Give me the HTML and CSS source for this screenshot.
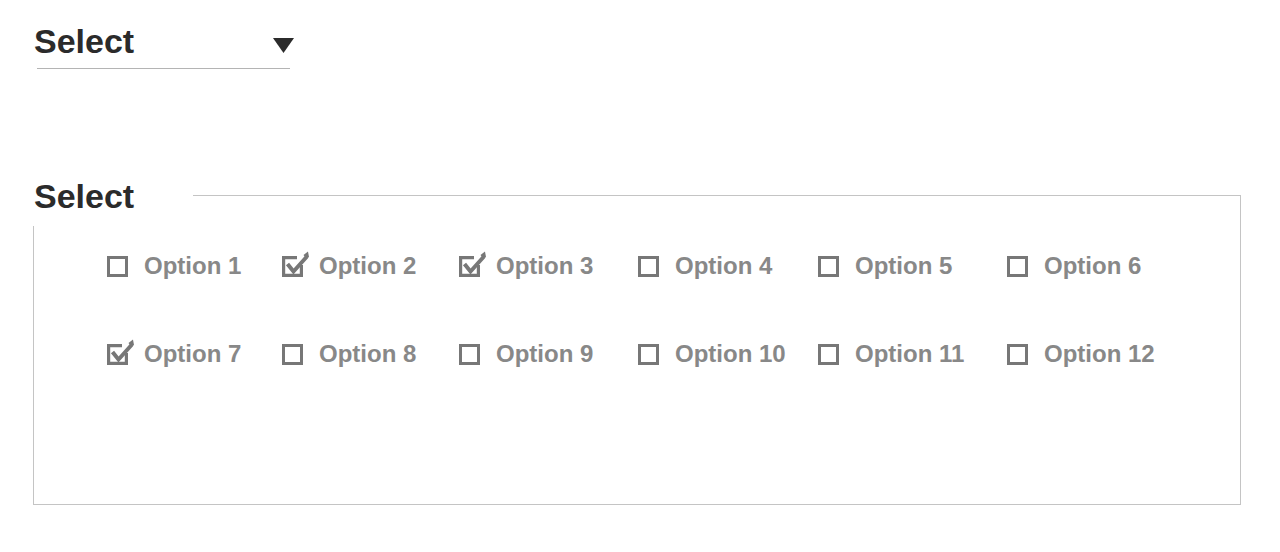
FILE: index.html
```html
<!DOCTYPE html>
<html lang="en">
<head>
<meta charset="utf-8">
<title>Select</title>
<link rel="stylesheet" href="styles.css">
</head>
<body>
  <div class="dropdown">
    <span class="dropdown-label">Select</span>
    <svg class="dropdown-arrow" width="21" height="15" viewBox="0 0 21 15"><polygon points="0,0 21,0 10.5,15" fill="#2b2b2b"/></svg>
  </div>

  <div class="group">
    <div class="group-title">Select</div>
    <div class="options">
      <label class="option"><span class="box"></span><span class="text">Option 1</span></label>
      <label class="option"><span class="box checked"><svg viewBox="0 0 21 21" width="21" height="21"><path d="M15 1.6H1.6V19.4H19.4V9" fill="none" stroke="#777" stroke-width="3.2"/><path d="M5.5 8L11.5 15.5L24.5 1" fill="none" stroke="#777" stroke-width="4"/><polygon points="21.5,-1 26,-4.5 27,1 24.5,3" fill="#777"/></svg></span><span class="text">Option 2</span></label>
      <label class="option"><span class="box checked"><svg viewBox="0 0 21 21" width="21" height="21"><path d="M15 1.6H1.6V19.4H19.4V9" fill="none" stroke="#777" stroke-width="3.2"/><path d="M5.5 8L11.5 15.5L24.5 1" fill="none" stroke="#777" stroke-width="4"/><polygon points="21.5,-1 26,-4.5 27,1 24.5,3" fill="#777"/></svg></span><span class="text">Option 3</span></label>
      <label class="option"><span class="box"></span><span class="text">Option 4</span></label>
      <label class="option"><span class="box"></span><span class="text">Option 5</span></label>
      <label class="option"><span class="box"></span><span class="text">Option 6</span></label>
      <label class="option"><span class="box checked"><svg viewBox="0 0 21 21" width="21" height="21"><path d="M15 1.6H1.6V19.4H19.4V9" fill="none" stroke="#777" stroke-width="3.2"/><path d="M5.5 8L11.5 15.5L24.5 1" fill="none" stroke="#777" stroke-width="4"/><polygon points="21.5,-1 26,-4.5 27,1 24.5,3" fill="#777"/></svg></span><span class="text">Option 7</span></label>
      <label class="option"><span class="box"></span><span class="text">Option 8</span></label>
      <label class="option"><span class="box"></span><span class="text">Option 9</span></label>
      <label class="option"><span class="box"></span><span class="text">Option 10</span></label>
      <label class="option"><span class="box"></span><span class="text">Option 11</span></label>
      <label class="option"><span class="box"></span><span class="text">Option 12</span></label>
    </div>
  </div>
</body>
</html>
```

FILE: styles.css
```css
html, body {
  margin: 0;
  padding: 0;
  background: #ffffff;
}

body {
  font-family: "Liberation Sans", Arial, sans-serif;
  font-weight: bold;
}

.dropdown {
  display: flex;
  justify-content: space-between;
  align-items: flex-start;
  width: 253px;
  margin: 21px 0 0 37px;
  padding-bottom: 7px;
  border-bottom: 1px solid #b4b4b4;
}

.dropdown-label {
  margin-left: -3px;
  font-size: 34px;
  line-height: 40px;
  color: #2b2b2b;
}

.dropdown-arrow {
  display: block;
  margin-top: 17px;
  margin-right: -4px;
}

.group {
  box-sizing: border-box;
  width: 1208px;
  height: 310px;
  margin: 126px 0 0 33px;
  border: 1px solid #c4c4c4;
}

.group-title {
  width: 159px;
  margin: -20px 0 0 -1px;
  padding: 0 0 10px 1px;
  background: #ffffff;
  font-size: 34px;
  line-height: 40px;
  color: #2b2b2b;
}

.options {
  display: grid;
  grid-template-columns: 175px 177px 179px 180px 189px auto;
  row-gap: 48px;
  margin-top: 20px;
  padding-left: 73px;
}

.option {
  display: flex;
  align-items: center;
  height: 40px;
}

.box {
  box-sizing: border-box;
  width: 21px;
  height: 21px;
  border: 3px solid #777777;
  flex: none;
}

.box.checked {
  border: none;
}

.box svg {
  display: block;
  overflow: visible;
}

.text {
  margin-left: 16px;
  font-size: 24px;
  line-height: 40px;
  color: #888888;
}
```
